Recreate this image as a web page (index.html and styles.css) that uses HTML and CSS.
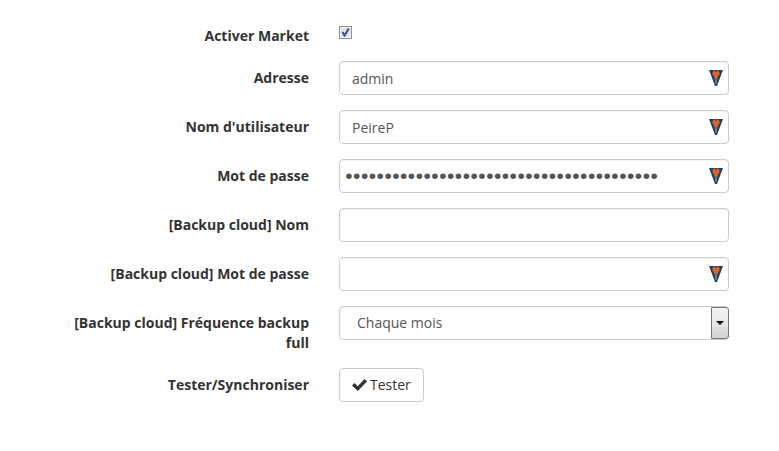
FILE: index.html
```html
<!DOCTYPE html>
<html lang="fr">
<head>
<meta charset="utf-8">
<meta name="viewport" content="width=device-width, initial-scale=1">
<title>Market</title>
<link rel="stylesheet" href="styles.css">
</head>
<body>
<svg class="symbols" aria-hidden="true">
  <symbol id="key" viewBox="0 0 14 16">
    <path d="M0 0H14L8 16H6Z" fill="#1d4263"/>
    <path d="M5.500 6H8.500L7.800 14H6.200Z" fill="#857078"/>
    <path d="M3.500 2L5 .500H9L10.500 2V4.500L9 6L8.500 8H5.500L5 6L3.500 4.500Z" fill="#df642b"/>
    <path d="M6 0H8V2H6Z" fill="#5a4a50"/>
  </symbol>
</svg>
<form class="form">
  <div class="row">
    <label class="label" for="market">Activer Market</label>
    <div class="field"><input class="check" type="checkbox" id="market" checked></div>
  </div>
  <div class="row">
    <label class="label" for="address">Adresse</label>
    <div class="field"><input class="control" type="text" id="address" value="admin"><svg class="key"><use href="#key"/></svg></div>
  </div>
  <div class="row">
    <label class="label" for="user">Nom d'utilisateur</label>
    <div class="field"><input class="control" type="text" id="user" value="PeireP"><svg class="key"><use href="#key"/></svg></div>
  </div>
  <div class="row">
    <label class="label" for="password">Mot de passe</label>
    <div class="field"><input class="control secret" type="password" id="password" value="0000000000000000000000000000000000000000"><svg class="key"><use href="#key"/></svg></div>
  </div>
  <div class="row">
    <label class="label" for="cloud-name">[Backup cloud] Nom</label>
    <div class="field"><input class="control" type="text" id="cloud-name"></div>
  </div>
  <div class="row">
    <label class="label" for="cloud-password">[Backup cloud] Mot de passe</label>
    <div class="field"><input class="control secret" type="password" id="cloud-password"><svg class="key"><use href="#key"/></svg></div>
  </div>
  <div class="row">
    <label class="label" for="frequency">[Backup cloud] Fréquence backup full</label>
    <div class="field">
      <select class="control select" id="frequency"><option>Chaque mois</option></select>
      <span class="arrow"><svg viewBox="0 0 8 4" width="8" height="4"><path d="M0 0H8L4 4Z" fill="#000"/></svg></span>
    </div>
  </div>
  <div class="row">
    <label class="label" for="test">Tester/Synchroniser</label>
    <div class="field">
      <button class="button" type="button" id="test"><svg viewBox="0 0 15 12" width="15" height="12"><path d="M0 6.500L2.400 4L5.700 7.200L12.500 0L15 2.400L5.800 12Z" fill="#333"/></svg>Tester</button>
    </div>
  </div>
</form>
</body>
</html>
```
FILE: styles.css
```css
* { box-sizing: border-box; }

body {
  margin: 0;
  background: #fff;
  color: #333;
  font: 14px/20px "Open Sans", "Noto Sans", sans-serif;
}

.symbols { display: none; }

.form {
  display: flex;
  flex-direction: column;
  gap: 15px;
  padding: 19px 50px 19px 59px;
}

.row {
  display: grid;
  grid-template-columns: 25fr 39fr;
  column-gap: 30px;
  align-items: start;
}

.label {
  padding-top: 7px;
  font-weight: 700;
  text-align: right;
}

.field {
  position: relative;
  display: flex;
}

.control {
  width: 100%;
  height: 34px;
  margin: 0;
  padding: 6px 12px;
  border: 1px solid #ccc;
  border-radius: 4px;
  background: #fff;
  box-shadow: inset 0 1px 1px rgba(0, 0, 0, .05);
  color: #555;
  font: inherit;
}

.secret {
  padding: 6px 5px;
  font-family: "DejaVu Sans Mono", monospace;
  font-size: 13px;
  -webkit-text-stroke: 2px #555;
}

.key {
  position: absolute;
  top: 9px;
  right: 6px;
  width: 14px;
  height: 16px;
}

.check {
  appearance: none;
  width: 13px;
  height: 13px;
  margin: 7px 0 0;
  border: 1px solid #8e8f8f;
  background: #dfe3e8;
  box-shadow: inset 0 0 0 1px #f4f4f4;
}

.check:checked {
  background: #dfe3e8 url('data:image/svg+xml,<svg xmlns="http://www.w3.org/2000/svg" viewBox="0 0 11 11"><path d="M2.500 5L4.500 8.500L8.800 1.500" fill="none" stroke="%233b4c86" stroke-width="2"/></svg>') center / 11px 11px no-repeat;
}

.select {
  appearance: none;
  padding: 6px 30px 6px 17px;
}

.arrow {
  position: absolute;
  top: 1px;
  right: 0;
  bottom: 1px;
  display: flex;
  align-items: center;
  justify-content: center;
  width: 18px;
  border: 1px solid #777;
  border-radius: 0 3px 3px 0;
  background: linear-gradient(#f3f3f3, #e8e8e8 50%, #d2d2d2);
  pointer-events: none;
}

.button {
  display: flex;
  align-items: center;
  gap: 3px;
  height: 34px;
  padding: 6px 12px;
  border: 1px solid #ccc;
  border-radius: 4px;
  background: #fff;
  color: #333;
  font: inherit;
}
```
